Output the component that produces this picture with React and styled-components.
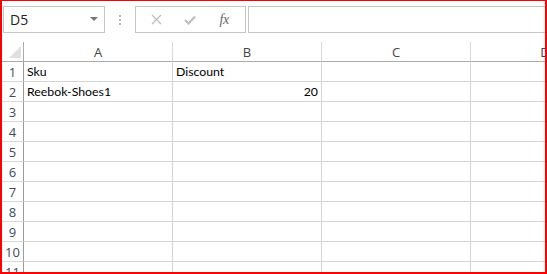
import React from "react";
import styled, { createGlobalStyle } from "styled-components";

const GlobalStyle = createGlobalStyle`
  html, body {
    margin: 0;
    padding: 0;
    background: #fff;
  }
  * {
    box-sizing: border-box;
  }
`;

const Frame = styled.div`
  width: 547px;
  height: 274px;
  border: 2px solid #ff0000;
  border-top-width: 1px;
  display: flex;
  flex-direction: column;
  overflow: hidden;
  background: #fff;
  font-family: "Open Sans", "Liberation Sans", sans-serif;
`;

const Toolbar = styled.div`
  display: flex;
  align-items: flex-start;
  height: 41px;
  padding: 5px 0 0 1px;
  flex-shrink: 0;
`;

const NameBox = styled.div`
  width: 102px;
  height: 27px;
  flex-shrink: 0;
  border: 1px solid #c6c6c6;
  display: flex;
  align-items: center;
  justify-content: space-between;
  padding: 0 6px 0 6px;
  font-size: 14px;
  color: #222;
`;

const Caret = styled.span`
  width: 0;
  height: 0;
  border-left: 4px solid transparent;
  border-right: 4px solid transparent;
  border-top: 4px solid #777;
  margin-top: -2px;
`;

const Dots = styled.div`
  width: 30px;
  height: 27px;
  flex-shrink: 0;
  display: flex;
  flex-direction: column;
  align-items: center;
  justify-content: center;
  gap: 2px;
  span {
    width: 2px;
    height: 2px;
    background: #b5b5b5;
  }
`;

const ButtonGroup = styled.div`
  width: 111px;
  height: 27px;
  border: 1px solid #c6c6c6;
  display: flex;
  align-items: center;
  justify-content: space-around;
  padding: 0 4px;
  flex-shrink: 0;
`;

const IconSlot = styled.span`
  display: flex;
  align-items: center;
  justify-content: center;
  width: 28px;
`;

const Fx = styled.span`
  font-family: "Liberation Serif", serif;
  font-style: italic;
  font-size: 14px;
  color: #666;
  letter-spacing: -0.5px;
`;

const FormulaInput = styled.div`
  height: 27px;
  margin-left: 2px;
  border: 1px solid #c6c6c6;
  flex-shrink: 0;
  width: 320px;
`;

const Sheet = styled.div`
  display: grid;
  grid-template-columns: 22px repeat(4, 149px);
  grid-auto-rows: 20px;
  font-family: "Lato", "Liberation Sans", sans-serif;
`;

const Corner = styled.div`
  position: relative;
  border-right: 1px solid #ababab;
  border-bottom: 1px solid #ababab;
  &::after {
    content: "";
    position: absolute;
    right: 2px;
    bottom: 3px;
    width: 0;
    height: 0;
    border-left: 12px solid transparent;
    border-bottom: 12px solid #dfdfdf;
  }
`;

const ColHead = styled.div`
  display: flex;
  align-items: center;
  justify-content: center;
  border-right: 1px solid #d8d8d8;
  border-bottom: 1px solid #ababab;
  font-family: "Open Sans", "Liberation Sans", sans-serif;
  font-size: 13px;
  color: #444;
`;

const RowHead = styled.div`
  display: flex;
  align-items: center;
  justify-content: center;
  border-right: 1px solid #9b9b9b;
  border-bottom: 1px solid #d8d8d8;
  font-family: "Open Sans", "Liberation Sans", sans-serif;
  font-size: 13px;
  color: #3f4a5a;
  padding-top: 1px;
`;

const Cell = styled.div`
  display: flex;
  align-items: flex-end;
  justify-content: ${(p) => (p.$num ? "flex-end" : "flex-start")};
  padding: 0 3px 2px 3px;
  border-right: 1px solid #d4d4d4;
  border-bottom: 1px solid #d4d4d4;
  font-size: 12.3px;
  color: #000;
  white-space: nowrap;
`;

const columns = ["A", "B", "C", "D"];
const data = {
  1: ["Sku", "Discount", "", ""],
  2: ["Reebok-Shoes1", "20", "", ""],
};

const App = () => {
  const rows = Array.from({ length: 11 }, (_, i) => i + 1);
  return (
    <>
      <GlobalStyle />
      <Frame>
        <Toolbar>
          <NameBox>
            D5
            <Caret />
          </NameBox>
          <Dots>
            <span />
            <span />
            <span />
          </Dots>
          <ButtonGroup>
            <IconSlot>
              <svg width="11" height="11" viewBox="0 0 11 11">
                <path d="M1 1 L10 10 M10 1 L1 10" stroke="#bdbdbd" strokeWidth="1.3" fill="none" />
              </svg>
            </IconSlot>
            <IconSlot>
              <svg width="12" height="10" viewBox="0 0 12 10">
                <path d="M1 5 L4.5 8.5 L11 1.5" stroke="#bdbdbd" strokeWidth="2" fill="none" />
              </svg>
            </IconSlot>
            <IconSlot>
              <Fx>fx</Fx>
            </IconSlot>
          </ButtonGroup>
          <FormulaInput />
        </Toolbar>
        <Sheet>
          <Corner />
          {columns.map((c) => (
            <ColHead key={c}>{c}</ColHead>
          ))}
          {rows.map((r) => (
            <React.Fragment key={r}>
              <RowHead>{r}</RowHead>
              {columns.map((c, ci) => {
                const v = data[r] ? data[r][ci] : "";
                return (
                  <Cell key={c} $num={/^\d+$/.test(v)}>
                    {v}
                  </Cell>
                );
              })}
            </React.Fragment>
          ))}
        </Sheet>
      </Frame>
    </>
  );
};

export default App;
